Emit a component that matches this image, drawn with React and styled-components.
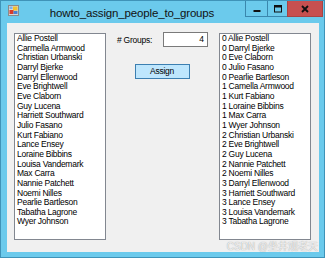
import React from "react";
import styled, { createGlobalStyle } from "styled-components";

const Global = createGlobalStyle`
  html, body { margin: 0; padding: 0; background: #ffffff; }
  body { font-family: "Liberation Sans", Arial, sans-serif; }
`;

const Window = styled.div`
  position: relative;
  box-sizing: border-box;
  width: 325px;
  height: 258px;
  background: #6bcaec;
  border: 1px solid #3f93b8;
  display: flex;
  flex-direction: column;
  overflow: hidden;
`;

const TitleBar = styled.div`
  height: 22px;
  display: flex;
  align-items: flex-start;
  flex-shrink: 0;
`;

const AppIcon = styled.svg`
  width: 11px;
  height: 11px;
  margin: 4px 0 0 7px;
  flex-shrink: 0;
`;

const Title = styled.div`
  flex: 1;
  text-align: center;
  font-family: "Liberation Sans", Arial, sans-serif;
  font-size: 11.5px;
  letter-spacing: -0.15px;
  line-height: 22px;
  color: #111;
  padding-top: 1px;
  box-sizing: border-box;
  height: 22px;
  white-space: nowrap;
`;

const Controls = styled.div`
  display: flex;
  margin-right: 1px;
`;

const CtlButton = styled.div`
  box-sizing: border-box;
  width: ${(p) => p.$w}px;
  height: 16px;
  display: flex;
  align-items: center;
  justify-content: center;
  background: ${(p) => (p.$close ? "#c75050" : "transparent")};
  border: 1px solid ${(p) => (p.$close ? "#a84444" : "#3a87ad")};
  border-top: none;
  & + & { margin-left: -1px; }
`;

const Client = styled.div`
  flex: 1;
  margin: 0 5px 5px 6px;
  background: #f0f0f0;
  display: grid;
  grid-template-columns: 92px 1fr 92px;
  padding: 10px 8px 12px 7px;
  box-sizing: border-box;
  min-height: 0;
`;

const ListBox = styled.div`
  box-sizing: border-box;
  background: #ffffff;
  border: 1px solid #828790;
  padding: 0 2px;
  font-family: "Liberation Sans", Arial, sans-serif;
  font-size: 8.5px;
  letter-spacing: -0.25px;
  color: #000;
  overflow: hidden;
`;

const Item = styled.div`
  height: 9.67px;
  line-height: 9.67px;
  white-space: nowrap;
`;

const Middle = styled.div`
  display: flex;
  flex-direction: column;
  align-items: center;
  padding: 0 11px;
`;

const GroupsRow = styled.div`
  align-self: stretch;
  display: flex;
  justify-content: space-between;
  align-items: center;
  margin-top: -1px;
`;

const Label = styled.span`
  font-family: "Liberation Sans", Arial, sans-serif;
  font-size: 8.5px;
  letter-spacing: -0.25px;
  color: #000;
  margin-top: 1px;
`;

const TextBox = styled.div`
  box-sizing: border-box;
  width: 45px;
  height: 15px;
  background: #fff;
  border: 1px solid #7a7a7a;
  font-family: "Liberation Sans", Arial, sans-serif;
  font-size: 8.5px;
  line-height: 13px;
  text-align: right;
  padding-right: 3px;
  color: #000;
`;

const Button = styled.div`
  box-sizing: border-box;
  width: 55px;
  height: 15px;
  margin-top: 17px;
  margin-right: 1px;
  background: #bee6fd;
  border: 1px solid #3c7fb1;
  font-family: "Liberation Sans", Arial, sans-serif;
  font-size: 8.5px;
  letter-spacing: -0.25px;
  line-height: 13px;
  text-align: center;
  color: #000;
`;

const Watermark = styled.div`
  position: absolute;
  right: 6px;
  bottom: 4px;
  font-family: "Liberation Sans", "Noto Sans CJK SC", sans-serif;
  font-size: 10px;
  color: rgba(245, 245, 245, 0.95);
  text-shadow: 0 0 1px rgba(100, 100, 100, 0.7);
  white-space: nowrap;
`;

const people = [
  "Allie Postell",
  "Carmella Armwood",
  "Christian Urbanski",
  "Darryl Bjerke",
  "Darryl Ellenwood",
  "Eve Brightwell",
  "Eve Claborn",
  "Guy Lucena",
  "Harriett Southward",
  "Julio Fasano",
  "Kurt Fabiano",
  "Lance Ensey",
  "Loraine Bibbins",
  "Louisa Vandemark",
  "Max Carra",
  "Nannie Patchett",
  "Noemi Nilles",
  "Pearlie Bartleson",
  "Tabatha Lagrone",
  "Wyer Johnson",
];

const groups = [
  "0 Allie Postell",
  "0 Darryl Bjerke",
  "0 Eve Claborn",
  "0 Julio Fasano",
  "0 Pearlie Bartleson",
  "1 Camella Armwood",
  "1 Kurt Fabiano",
  "1 Loraine Bibbins",
  "1 Max Carra",
  "1 Wyer Johnson",
  "2 Christian Urbanski",
  "2 Eve Brightwell",
  "2 Guy Lucena",
  "2 Nannie Patchett",
  "2 Noemi Nilles",
  "3 Darryl Ellenwood",
  "3 Harriett Southward",
  "3 Lance Ensey",
  "3 Louisa Vandemark",
  "3 Tabatha Lagrone",
];

export default function App() {
  return (
    <>
      <Global />
      <Window>
        <TitleBar>
          <AppIcon viewBox="0 0 11 11">
            <rect x="0.5" y="0.5" width="10" height="10" fill="#d8d8d8" stroke="#8a8a8a" />
            <rect x="5" y="1.5" width="4.5" height="4" fill="#f2c230" />
            <rect x="1.5" y="5" width="4" height="4" fill="#d83a2a" />
            <rect x="5.5" y="6" width="4" height="3" fill="#4a7fd0" />
            <rect x="1.5" y="1.5" width="3" height="2.5" fill="#7fb0e8" />
          </AppIcon>
          <Title>howto_assign_people_to_groups</Title>
          <Controls>
            <CtlButton $w={23}>
              <svg width="8" height="8" viewBox="0 0 8 8">
                <rect x="0.5" y="5" width="7" height="2" fill="#111" />
              </svg>
            </CtlButton>
            <CtlButton $w={21}>
              <svg width="8" height="8" viewBox="0 0 8 8">
                <rect x="0.5" y="0.5" width="7" height="6.5" fill="none" stroke="#111" />
                <rect x="0.5" y="0.5" width="7" height="2" fill="#111" />
              </svg>
            </CtlButton>
            <CtlButton $w={36} $close>
              <svg width="8" height="8" viewBox="0 0 8 8">
                <path d="M1 1 L7 7 M7 1 L1 7" stroke="#111" strokeWidth="1.8" />
              </svg>
            </CtlButton>
          </Controls>
        </TitleBar>
        <Client>
          <ListBox>
            {people.map((p) => (
              <Item key={p}>{p}</Item>
            ))}
          </ListBox>
          <Middle>
            <GroupsRow>
              <Label># Groups:</Label>
              <TextBox>4</TextBox>
            </GroupsRow>
            <Button>Assign</Button>
          </Middle>
          <ListBox>
            {groups.map((g) => (
              <Item key={g}>{g}</Item>
            ))}
          </ListBox>
        </Client>
        <Watermark>CSDN @坐井观老天</Watermark>
      </Window>
    </>
  );
}
